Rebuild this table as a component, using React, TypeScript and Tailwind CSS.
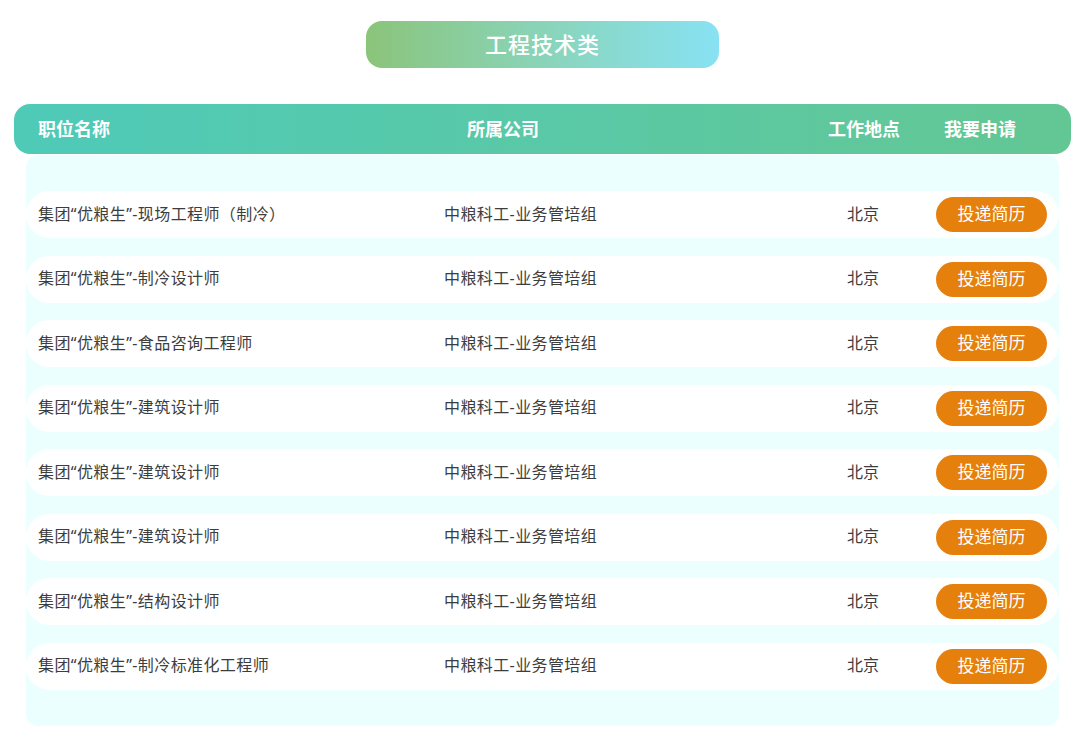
const jobs = [
  '集团“优粮生”-现场工程师（制冷）',
  '集团“优粮生”-制冷设计师',
  '集团“优粮生”-食品咨询工程师',
  '集团“优粮生”-建筑设计师',
  '集团“优粮生”-建筑设计师',
  '集团“优粮生”-建筑设计师',
  '集团“优粮生”-结构设计师',
  '集团“优粮生”-制冷标准化工程师',
]

export default function App() {
  return (
    <div
      className="w-[1080px] h-[750px] bg-white overflow-hidden"
      style={{ fontFamily: '"Noto Sans CJK SC", "Noto Sans", sans-serif' }}
    >
      {/* 标题 */}
      <div className="pt-[21px] flex justify-center">
        <div className="w-[353px] h-[47px] ml-[5px] rounded-[16px] bg-gradient-to-r from-[#8bc47a] to-[#88e2f3] flex items-center justify-center pb-[2px]">
          <span className="text-white text-[22px] font-medium tracking-[1px]">工程技术类</span>
        </div>
      </div>

      {/* 表头 */}
      <div className="mt-[36px] mx-[14px] w-[1057px] h-[50px] rounded-[16px] bg-gradient-to-r from-[#4ecab8] to-[#63c794] flex items-center pb-[1px] text-white text-[18px] font-bold">
        <div className="w-[453px] pl-[24px]">职位名称</div>
        <div className="w-[361px]">所属公司</div>
        <div className="w-[116px]">工作地点</div>
        <div>我要申请</div>
      </div>

      {/* 列表 */}
      <div className="mt-[1px] ml-[26px] w-[1033px] rounded-[12px] bg-[#ecffff] py-[36px] flex flex-col gap-[17.5px]">
        {jobs.map((job, i) => (
          <div
            key={i}
            className="h-[47px] bg-white rounded-[24px] flex items-center pb-[2px] text-[16px] text-[#3d3d3d]"
            style={{ fontFamily: '"Noto Sans", "Noto Sans CJK SC", sans-serif' }}
          >
            <div className="w-[418px] pl-[12px] tracking-[0.4px]">{job}</div>
            <div className="w-[403px] tracking-[0.4px]">中粮科工-业务管培组</div>
            <div className="w-[89px]">北京</div>
            <button className="w-[111px] h-[35px] mt-[2px] rounded-full bg-[#e5800d] text-white text-[17px] leading-none pb-[2px]">投递简历</button>
          </div>
        ))}
      </div>
    </div>
  )
}
